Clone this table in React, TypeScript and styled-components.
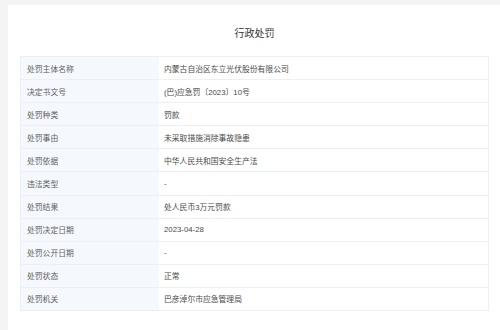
import styled, { createGlobalStyle } from "styled-components";

const GlobalStyle = createGlobalStyle`
  html, body {
    margin: 0;
    padding: 0;
    background: #f4f4f4;
    overflow: hidden;
  }
  body {
    font-family: "Liberation Sans", "Noto Sans CJK SC", sans-serif;
  }
`

const Page = styled.div`
  width: 500px;
  height: 330px;
  padding: 5px 0 0 8px;
  box-sizing: border-box;
`

const Card = styled.section`
  background-color: #ffffff;
  height: 325px;
  padding: 0 11px 0 12px;
  box-sizing: border-box;
`

const Title = styled.h2`
  margin: 0;
  padding-top: 22px;
  height: 51px;
  box-sizing: border-box;
  text-align: center;
  font-size: 10px;
  line-height: 14px;
  font-weight: normal;
  color: #333333;
`

const Table = styled.div`
  border: 1px solid #eceff4;
  border-bottom: none;
`

const Row = styled.div`
  display: grid;
  grid-template-columns: 138px 1fr;
  height: 23.1px;
  border-bottom: 1px solid #eceff4;
  box-sizing: border-box;
`

const Cell = styled.div<{ $label?: boolean }>`
  display: flex;
  align-items: center;
  padding-left: ${(p) => (p.$label ? "6px" : "5px")};
  font-size: 7.8px;
  color: ${(p) => (p.$label ? "#606266" : "#4a4a4a")};
  background-color: ${(p) => (p.$label ? "#f5f8fc" : "#ffffff")};
  white-space: nowrap;
`

const rows: [string, string][] = [
  ["处罚主体名称", "内蒙古自治区东立光伏股份有限公司"],
  ["决定书文号", "(巴)应急罚〔2023〕10号"],
  ["处罚种类", "罚款"],
  ["处罚事由", "未采取措施消除事故隐患"],
  ["处罚依据", "中华人民共和国安全生产法"],
  ["违法类型", "-"],
  ["处罚结果", "处人民币3万元罚款"],
  ["处罚决定日期", "2023-04-28"],
  ["处罚公开日期", "-"],
  ["处罚状态", "正常"],
  ["处罚机关", "巴彦淖尔市应急管理局"],
]

export default function App() {
  return (
    <Page>
      <GlobalStyle />
      <Card>
        <Title>行政处罚</Title>
        <Table>
          {rows.map(([label, value]) => (
            <Row key={label}>
              <Cell $label>{label}</Cell>
              <Cell>{value}</Cell>
            </Row>
          ))}
        </Table>
      </Card>
    </Page>
  );
}
